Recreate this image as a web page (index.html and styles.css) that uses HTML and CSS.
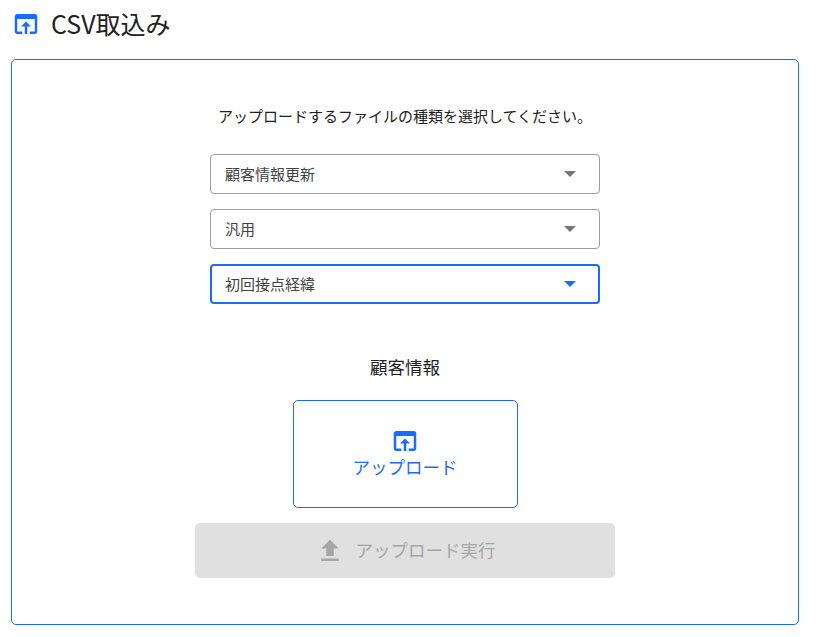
FILE: index.html
```html
<!DOCTYPE html>
<html lang="ja">
<head>
  <meta charset="UTF-8" />
  <title>CSV取込み</title>
  <link rel="stylesheet" href="styles.css">
</head>
<body>
  <header class="page-title">
    <svg class="title-icon" viewBox="0 0 24 24"><path d="M19 4H5c-1.1 0-2 .9-2 2v12c0 1.1.9 2 2 2h4v-2H5V8h14v10h-4v2h4c1.1 0 2-.9 2-2V6c0-1.1-.9-2-2-2zm-7 6l-4 4h3v6h2v-6h3l-4-4z"/></svg>
    <h1>CSV取込み</h1>
  </header>

  <main class="panel">
    <p class="lead">アップロードするファイルの種類を選択してください。</p>

    <div class="selects">
      <div class="select"><span>顧客情報更新</span><i class="arrow"></i></div>
      <div class="select"><span>汎用</span><i class="arrow"></i></div>
      <div class="select focused"><span>初回接点経緯</span><i class="arrow"></i></div>
    </div>

    <h2 class="section-name">顧客情報</h2>

    <button class="upload-box">
      <svg class="upload-icon" viewBox="0 0 24 24"><path d="M19 4H5c-1.1 0-2 .9-2 2v12c0 1.1.9 2 2 2h4v-2H5V8h14v10h-4v2h4c1.1 0 2-.9 2-2V6c0-1.1-.9-2-2-2zm-7 6l-4 4h3v6h2v-6h3l-4-4z"/></svg>
      <span>アップロード</span>
    </button>

    <button class="run-btn" disabled>
      <svg class="run-icon" viewBox="0 0 24 24"><path d="M9 16h6v-6h4l-7-7-7 7h4zm-4 2h14v2H5z"/></svg>
      <span>アップロード実行</span>
    </button>
  </main>
</body>
</html>
```

FILE: styles.css
```css
* {
  box-sizing: border-box;
}
body {
  margin: 0;
  background: #fff;
  color: #212121;
  font-family: "Noto Sans CJK JP", "Noto Sans", sans-serif;
}
.page-title {
  display: flex;
  align-items: center;
  height: 48px;
  padding-left: 11px;
}
.title-icon {
  width: 30px;
  height: 30px;
  fill: #1a6cff;
}
.page-title h1 {
  margin: 0 0 2px 10px;
  font-size: 25px;
  font-weight: 400;
  line-height: 46px;
}
.panel {
  display: flex;
  flex-direction: column;
  align-items: center;
  width: 788px;
  height: 566px;
  margin: 11px 0 0 11px;
  border: 1px solid #1a6cf5;
  border-radius: 5px;
}
.lead {
  margin: 44px 0 0;
  font-size: 15px;
  line-height: 24px;
}
.selects {
  display: flex;
  flex-direction: column;
  gap: 15px;
  margin-top: 26px;
}
.select {
  display: flex;
  align-items: center;
  justify-content: space-between;
  width: 390px;
  height: 40px;
  padding: 0 23px 0 14px;
  border: 1px solid #9e9e9e;
  border-radius: 4px;
  font-size: 15px;
  color: #424242;
}
.select span {
  margin-bottom: 2px;
}
.select.focused {
  border: 2px solid #1a6cff;
  padding: 0 22px 0 13px;
}
.arrow {
  width: 0;
  height: 0;
  border-left: 6px solid transparent;
  border-right: 6px solid transparent;
  border-top: 6px solid #757575;
}
.focused .arrow {
  border-top-color: #1a6cff;
}
.section-name {
  margin: 49px 0 0;
  font-size: 17.5px;
  font-weight: 400;
  line-height: 28px;
}
.upload-box {
  display: flex;
  flex-direction: column;
  align-items: center;
  justify-content: center;
  width: 225px;
  height: 108px;
  margin-top: 19px;
  padding: 0 0 4px;
  background: #fff;
  border: 1px solid #1a6cf5;
  border-radius: 5px;
  color: #1a6cff;
  font-family: inherit;
  font-size: 17.5px;
  line-height: 24px;
}
.upload-icon {
  width: 30px;
  height: 30px;
  margin-bottom: -1px;
  fill: #1a6cff;
}
.run-btn {
  display: flex;
  align-items: center;
  justify-content: center;
  gap: 11px;
  width: 420px;
  height: 55px;
  margin-top: 15px;
  padding: 0;
  background: #e0e0e0;
  border: none;
  border-radius: 5px;
  color: #a6a6a6;
  font-family: inherit;
  font-size: 17.5px;
}
.run-btn span {
  margin-bottom: 2px;
}
.run-icon {
  width: 30px;
  height: 30px;
  fill: #a6a6a6;
}
```
